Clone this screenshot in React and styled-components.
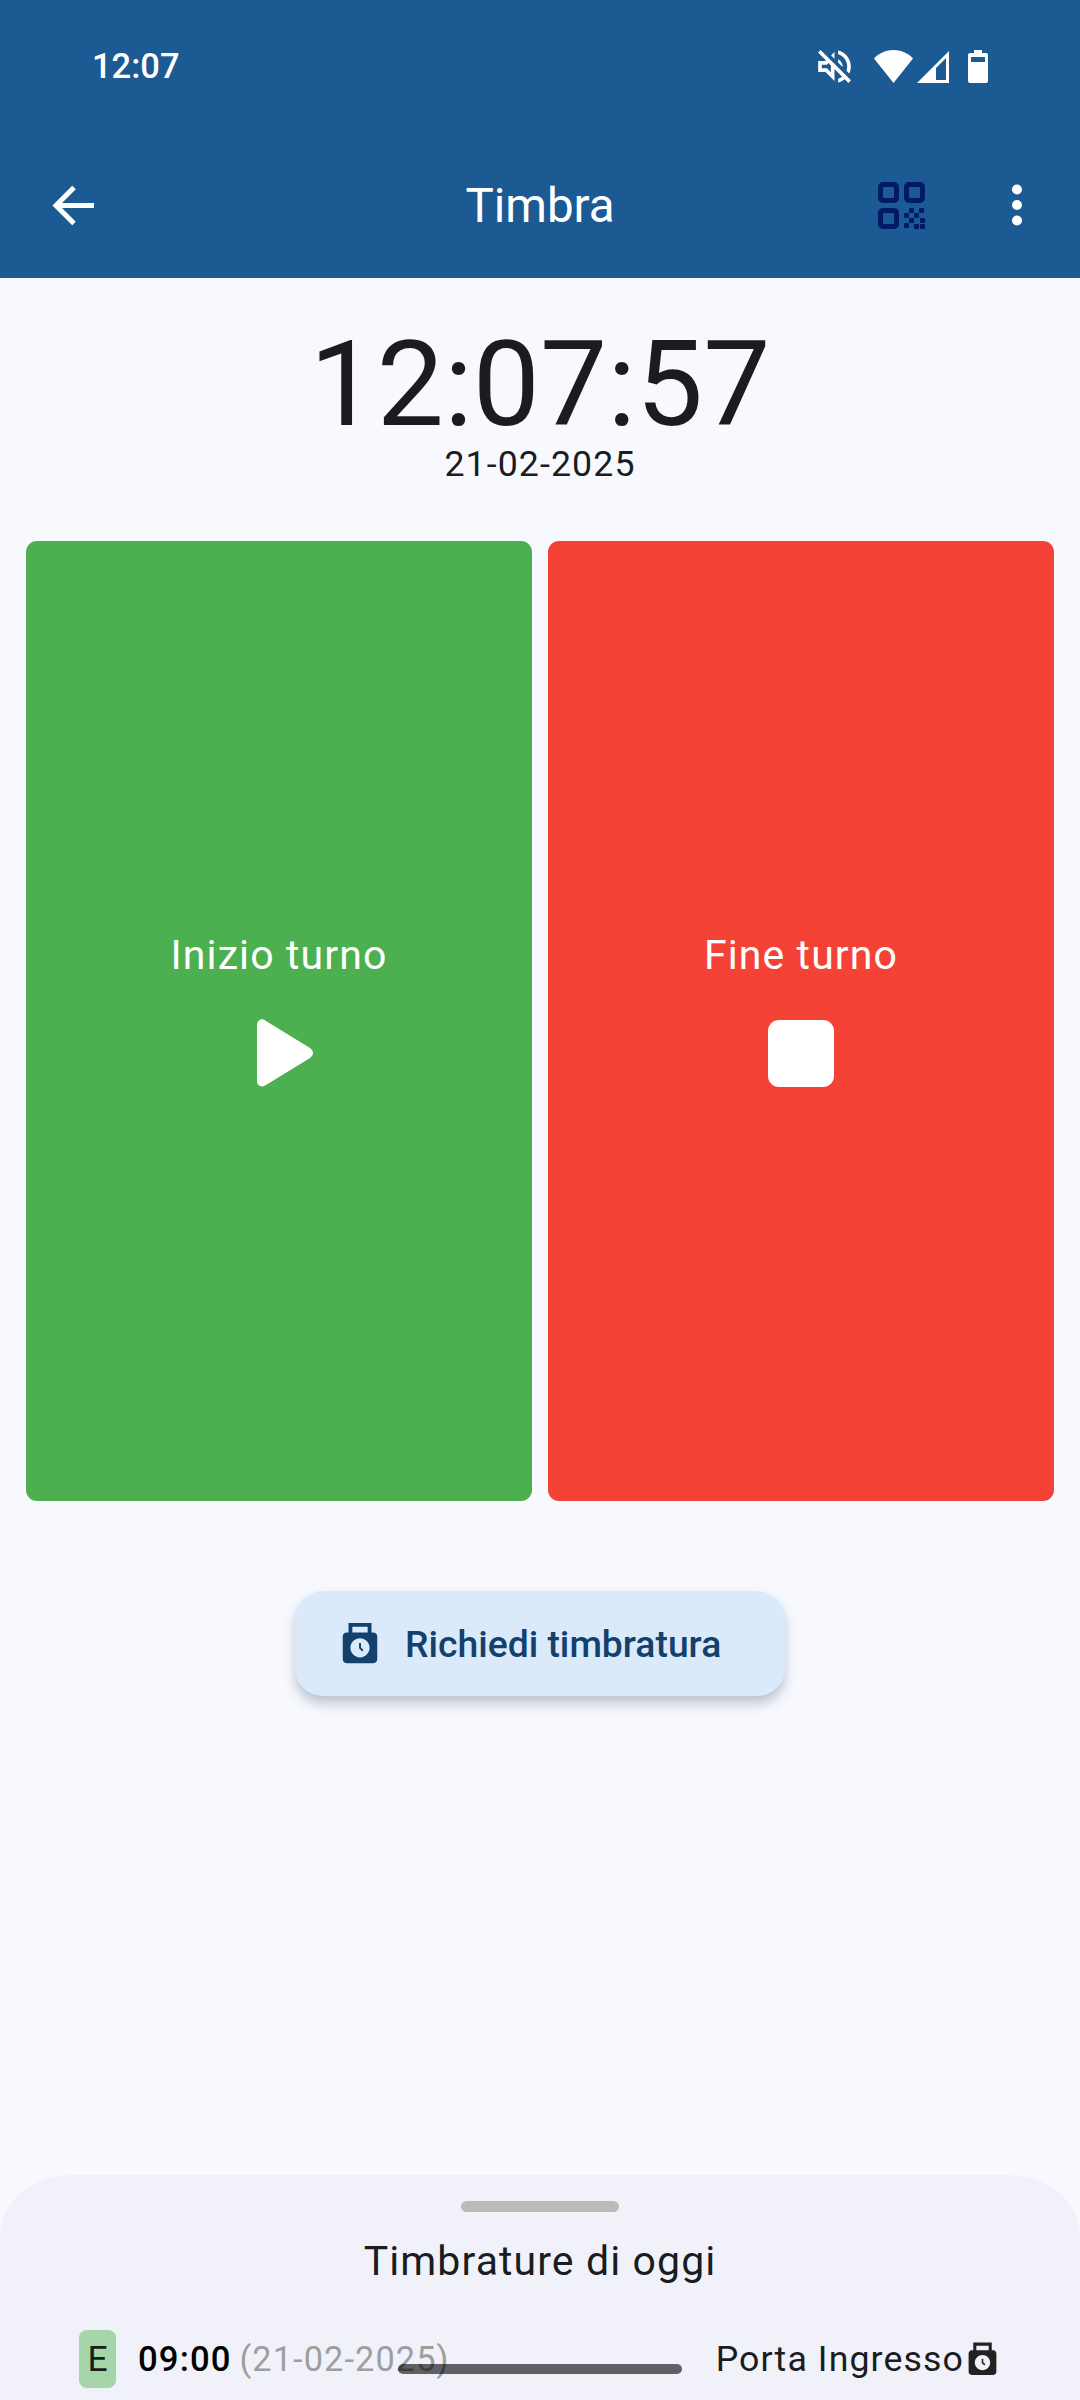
import React from "react";
import styled, { createGlobalStyle } from "styled-components";
import { MdPunchClock } from "react-icons/md";

const Global = createGlobalStyle`
  html, body { margin: 0; padding: 0; background: #f8f9ff; }
  * { box-sizing: border-box; }
`;

const Page = styled.div`
  position: relative;
  width: 1080px;
  height: 2400px;
  overflow: hidden;
  display: flex;
  flex-direction: column;
  background: #f8f9ff;
  font-family: Roboto, "Liberation Sans", sans-serif;
  color: #1a1c1e;
`;

const Header = styled.header`
  height: 278px;
  background: #1c5a94;
  color: #fff;
  display: flex;
  flex-direction: column;
`;

const StatusBar = styled.div`
  height: 132px;
  padding: 0 92px 0 92px;
  display: flex;
  align-items: center;
  justify-content: space-between;
`;

const StatusTime = styled.span`
  font-family: Roboto, sans-serif;
  font-size: 34.5px;
  font-weight: 500;
  color: #fff;
`;

const StatusIcons = styled.div`
  display: flex;
  align-items: flex-end;
  height: 34px;
`;

const AppBar = styled.div`
  height: 146px;
  display: grid;
  grid-template-columns: 1fr auto 1fr;
  align-items: center;
  padding: 0 57px 0 52px;
`;

const Title = styled.h1`
  margin: 2px 0 0 5px;
  font-size: 47.5px;
  font-weight: 400;
`;

const BarActions = styled.div`
  display: flex;
  justify-content: flex-end;
  align-items: center;
  gap: 86px;
`;

const Main = styled.main`
  flex: 1;
  display: flex;
  flex-direction: column;
  align-items: center;
`;

const Clock = styled.div`
  margin-top: 48px;
  height: 116px;
  font-size: 119.5px;
  line-height: 116px;
  font-weight: 400;
`;

const DateText = styled.div`
  margin-top: 2px;
  font-size: 35.7px;
  line-height: 40px;
  letter-spacing: 1.1px;
`;

const Cards = styled.div`
  margin-top: 57px;
  width: 100%;
  padding: 0 26px;
  display: grid;
  grid-template-columns: 1fr 1fr;
  gap: 16px;
`;

const Card = styled.div`
  height: 960px;
  border-radius: 11px;
  background: ${(p) => p.$color};
  color: #fff;
  display: flex;
  flex-direction: column;
  align-items: center;
  justify-content: center;
  gap: 35px;
  padding-bottom: 17px;
`;

const CardLabel = styled.span`
  font-size: 41px;
  line-height: 46px;
  letter-spacing: 1.1px;
`;

const CardIcon = styled.div`
  width: 80px;
  height: 80px;
  display: flex;
  align-items: center;
  justify-content: center;
`;

const PlayGlyph = styled.svg`
  display: block;
  margin-left: 12px;
  fill: #fff;
`;

const StopSquare = styled.div`
  width: 66px;
  height: 67px;
  border-radius: 11px;
  background: #fff;
`;

const RequestButton = styled.button`
  margin-top: 90px;
  width: 490px;
  height: 105px;
  border: 0;
  border-radius: 28px;
  background: #dbeafa;
  color: #14406e;
  box-shadow: 0 8px 12px rgba(40, 60, 90, 0.28);
  display: flex;
  align-items: center;
  padding: 0 0 0 42px;
  gap: 22px;
  font-family: inherit;
  font-size: 37.3px;
  font-weight: 500;
`;

const Sheet = styled.section`
  height: 225px;
  background: #f1f2f9;
  border-radius: 72px 72px 0 0 / 60px 60px 0 0;
  display: flex;
  flex-direction: column;
  align-items: center;
  padding-top: 26px;
`;

const Handle = styled.div`
  width: 158px;
  height: 11px;
  border-radius: 6px;
  background: #bbbbbb;
`;

const SheetTitle = styled.h2`
  margin: 26px 0 0;
  font-size: 41px;
  line-height: 46px;
  font-weight: 400;
  letter-spacing: 1.1px;
`;

const Row = styled.div`
  margin-top: 46px;
  width: 100%;
  padding: 0 79px;
  display: flex;
  align-items: center;
  justify-content: space-between;
`;

const RowLeft = styled.div`
  display: flex;
  align-items: center;
`;

const Badge = styled.span`
  width: 37px;
  height: 58px;
  border-radius: 8px;
  background: #a5d6a7;
  display: flex;
  align-items: center;
  justify-content: center;
  font-size: 35.5px;
`;

const Time = styled.span`
  margin-left: 22px;
  font-size: 34.7px;
  font-weight: 500;
  letter-spacing: 1.1px;
  color: #000;
`;

const DateNote = styled.span`
  margin-left: 8px;
  font-size: 34.3px;
  letter-spacing: 1.1px;
  color: #9e9e9e;
`;

const Place = styled.div`
  display: flex;
  align-items: center;
  font-size: 35.7px;
  letter-spacing: 1.1px;
  color: #1a1c1e;
`;

const HomeIndicator = styled.div`
  position: absolute;
  left: 398px;
  bottom: 26px;
  width: 284px;
  height: 10px;
  border-radius: 5px;
  background: rgba(0, 0, 0, 0.6);
`;

const StatusIcon = styled.svg`
  display: block;
  fill: #fff;
  margin-left: ${(p) => p.$gap || 0}px;
`;

const BackIcon = () => (
  <svg width="42" height="41" viewBox="0 0 42 41" fill="none" stroke="#fff" strokeWidth="5">
    <path d="M42 20.5H5M22 2.5 4 20.5 22 38.5" />
  </svg>
);

const QrIcon = () => (
  <svg width="47" height="47" viewBox="0 0 47 47" fill="#001a66" style={{ display: "block" }}>
    <path fillRule="evenodd" d="M5 0h11a5 5 0 0 1 5 5v11a5 5 0 0 1-5 5H5a5 5 0 0 1-5-5V5a5 5 0 0 1 5-5zm1 5a1 1 0 0 0-1 1v9a1 1 0 0 0 1 1h9a1 1 0 0 0 1-1V6a1 1 0 0 0-1-1z" />
    <path fillRule="evenodd" d="M31 0h11a5 5 0 0 1 5 5v11a5 5 0 0 1-5 5H31a5 5 0 0 1-5-5V5a5 5 0 0 1 5-5zm1 5a1 1 0 0 0-1 1v9a1 1 0 0 0 1 1h9a1 1 0 0 0 1-1V6a1 1 0 0 0-1-1z" />
    <path fillRule="evenodd" d="M5 26h11a5 5 0 0 1 5 5v11a5 5 0 0 1-5 5H5a5 5 0 0 1-5-5V31a5 5 0 0 1 5-5zm1 5a1 1 0 0 0-1 1v9a1 1 0 0 0 1 1h9a1 1 0 0 0 1-1v-9a1 1 0 0 0-1-1z" />
    <rect x="26" y="31" width="5" height="5" rx="1" />
    <rect x="31" y="26" width="5" height="5" rx="1" />
    <rect x="36" y="31" width="5" height="5" rx="1" />
    <rect x="41" y="26" width="5" height="5" rx="1" />
    <rect x="42" y="36" width="5" height="5" rx="1" />
    <rect x="31" y="36" width="5" height="5" rx="1" />
    <rect x="26" y="41" width="5" height="5" rx="1" />
    <rect x="36" y="42" width="5" height="5" rx="1" />
    <rect x="42" y="42" width="5" height="5" rx="1" />
  </svg>
);

const MoreIcon = () => (
  <svg width="12" height="42" viewBox="0 0 12 42" fill="#fff" style={{ display: "block" }}>
    <circle cx="6" cy="5.5" r="5" />
    <circle cx="6" cy="21" r="5" />
    <circle cx="6" cy="36.5" r="5" />
  </svg>
);

const PlayIcon = () => (
  <PlayGlyph width="56" height="68" viewBox="0 0 56 68">
    <path d="M0 6c0-5 5-8 9-4l44 27c4 3 4 7 0 10L9 66c-4 3-9 1-9-4z" />
  </PlayGlyph>
);

export default function App() {
  return (
    <Page>
      <Global />
      <Header>
        <StatusBar>
          <StatusTime>12:07</StatusTime>
          <StatusIcons>
            <StatusIcon width="33" height="33" viewBox="2.9 2.9 18.2 18.2">
              <path d="M4.34 2.93 2.93 4.34 7.29 8.7 7 9H3v6h4l5 5v-6.59l4.18 4.18c-.65.49-1.38.88-2.18 1.11v2.06c1.34-.3 2.57-.92 3.61-1.75l2.05 2.05 1.41-1.41L4.34 2.93zM10 15.17 7.83 13H5v-2h2.83l.88-.88L10 11.41v3.76zM19 12c0 .82-.15 1.61-.41 2.34l1.53 1.53c.56-1.17.88-2.48.88-3.87 0-4.28-2.99-7.86-7-8.77v2.06c2.89.86 5 3.54 5 6.71zm-7-8-1.88 1.88L12 7.76zm4.5 8c0-1.77-1.02-3.29-2.5-4.03v1.79l2.48 2.48c.01-.08.02-.16.02-.24z" />
            </StatusIcon>
            <StatusIcon $gap={23} width="39" height="33" viewBox="0 0 39 33">
              <path d="M0 8.5C5 3 12 0 19.5 0S34 3 39 8.5L19.5 33z" />
            </StatusIcon>
            <StatusIcon $gap={4} width="32" height="32" viewBox="0 0 32 32">
              <path fillRule="evenodd" d="M32 0v32H0zM29 7 19 17v12h10z" />
            </StatusIcon>
            <StatusIcon $gap={19} width="20" height="33" viewBox="0 0 20 33">
              <path fillRule="evenodd" d="M6 0h8v3h4a2 2 0 0 1 2 2v26a2 2 0 0 1-2 2H2a2 2 0 0 1-2-2V5a2 2 0 0 1 2-2h4zM3 7v5h14V7z" />
            </StatusIcon>
          </StatusIcons>
        </StatusBar>
        <AppBar>
          <BackIcon />
          <Title>Timbra</Title>
          <BarActions>
            <QrIcon />
            <MoreIcon />
          </BarActions>
        </AppBar>
      </Header>
      <Main>
        <Clock>12:07:57</Clock>
        <DateText>21-02-2025</DateText>
        <Cards>
          <Card $color="#4caf50">
            <CardLabel>Inizio turno</CardLabel>
            <CardIcon>
              <PlayIcon />
            </CardIcon>
          </Card>
          <Card $color="#f44336">
            <CardLabel>Fine turno</CardLabel>
            <CardIcon>
              <StopSquare />
            </CardIcon>
          </Card>
        </Cards>
        <RequestButton>
          <MdPunchClock size={46} />
          Richiedi timbratura
        </RequestButton>
      </Main>
      <Sheet>
        <Handle />
        <SheetTitle>Timbrature di oggi</SheetTitle>
        <Row>
          <RowLeft>
            <Badge>E</Badge>
            <Time>09:00</Time>
            <DateNote>(21-02-2025)</DateNote>
          </RowLeft>
          <Place>
            Porta Ingresso
            <MdPunchClock size={37} color="#222" />
          </Place>
        </Row>
      </Sheet>
      <HomeIndicator />
    </Page>
  );
}
